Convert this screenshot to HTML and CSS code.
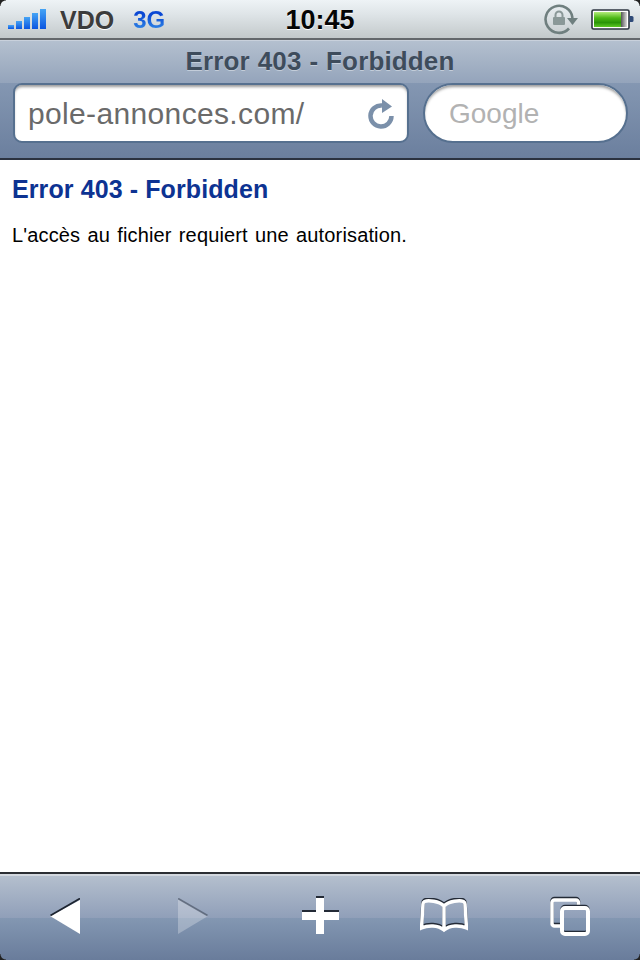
FILE: index.html
```html
<!DOCTYPE html>
<html lang="fr">
<head>
<meta charset="utf-8">
<title>Error 403 - Forbidden</title>
<link rel="stylesheet" href="styles.css">
</head>
<body>
<div class="phone">
  <header class="status">
    <div class="status-left">
      <svg class="signal" width="40" height="22" viewBox="0 0 40 22">
        <defs><linearGradient id="sig" x1="0" y1="0" x2="0" y2="1"><stop offset="0" stop-color="#45a4f5"/><stop offset="1" stop-color="#0b55e0"/></linearGradient></defs>
        <rect x="0" y="16" width="6" height="4" fill="url(#sig)"/>
        <rect x="8" y="12" width="6" height="8" fill="url(#sig)"/>
        <rect x="16" y="8" width="6" height="12" fill="url(#sig)"/>
        <rect x="24" y="4" width="6" height="16" fill="url(#sig)"/>
        <rect x="32" y="0" width="6" height="20" fill="url(#sig)"/>
      </svg>
      <span class="carrier">VDO</span>
      <span class="network">3G</span>
    </div>
    <div class="clock">10:45</div>
    <div class="status-right">
      <svg class="rotlock" width="36" height="34" viewBox="0 0 36 34">
        <path d="M25 25.500A13.500 13.500 0 1 1 28.500 15" fill="none" stroke="#6f7f7f" stroke-width="2.600"/>
        <path d="M23 15h11l-5.500 7z" fill="#6f7f7f"/>
        <rect x="9" y="14" width="12" height="8" rx="1" fill="#8a9898"/>
        <path d="M11.500 14v-2a3.500 3.500 0 0 1 7 0V14" fill="none" stroke="#8a9898" stroke-width="2"/>
      </svg>
      <svg class="battery" width="44" height="22" viewBox="0 0 44 22">
        <defs>
          <linearGradient id="bat" x1="0" y1="0" x2="0" y2="1"><stop offset="0" stop-color="#b4ec7c"/><stop offset=".4" stop-color="#4cb816"/><stop offset=".7" stop-color="#2a9408"/><stop offset="1" stop-color="#5cc824"/></linearGradient>
          <linearGradient id="batend" x1="0" y1="0" x2="1" y2="0"><stop offset="0" stop-color="#555"/><stop offset="1" stop-color="#ddd"/></linearGradient>
        </defs>
        <rect x="1" y="1" width="37" height="19" rx="1.500" fill="#fff" stroke="#2c3440" stroke-width="1.600"/>
        <rect x="3" y="3" width="27" height="15" fill="url(#bat)"/>
        <rect x="30" y="3" width="6" height="15" fill="url(#batend)"/>
        <path d="M38.500 7h2.500a1.500 1.500 0 0 1 1.500 1.500v3a1.500 1.500 0 0 1-1.500 1.500h-2.500z" fill="#2f4a78"/>
      </svg>
    </div>
  </header>
  <section class="nav">
    <h1 class="nav-title">Error 403 - Forbidden</h1>
    <div class="fields">
      <div class="url-field">
        <span class="url-text">pole-annonces.com/</span>
        <svg class="reload" width="28" height="32" viewBox="0 0 28 32">
          <path d="M23.500 18A10.500 10.500 0 1 1 14 7.500" fill="none" stroke="#7b90aa" stroke-width="4.500"/>
          <path d="M14 1l10 7.500-10 6.500z" fill="#7b90aa"/>
        </svg>
      </div>
      <div class="search-field"><span class="search-text">Google</span></div>
    </div>
  </section>
  <main class="content">
    <h2 class="heading">Error 403 - Forbidden</h2>
    <p class="message">L'accès au fichier requiert une autorisation.</p>
  </main>
  <footer class="toolbar">
    <svg class="tool tool-back" width="30" height="36" viewBox="0 0 30 36">
      <path d="M30 2v34L0 18z" fill="#fff"/>
      <path d="M30 0.500L0.500 17.500" stroke="#1d2430" stroke-width="1.800" fill="none"/>
    </svg>
    <svg class="tool tool-forward" width="30" height="36" viewBox="0 0 30 36">
      <path d="M0 1v35l30-18z" fill="#fff" fill-opacity=".27"/>
      <path d="M0 .5L29.500 17.500" stroke="#3c4656" stroke-opacity=".6" stroke-width="1.800" fill="none"/>
    </svg>
    <svg class="tool tool-add" width="37" height="38" viewBox="0 0 37 38">
      <path d="M14 0h8v2h-8zM0 14h14v2H0zM22 14h15v2H22z" fill="#232a36"/>
      <path d="M14 2h8v14h15v8H22v14h-8V24H0v-8h14z" fill="#fff"/>
    </svg>
    <svg class="tool tool-book" width="48" height="35" viewBox="0 0 48 35">
      <path class="emboss" transform="translate(0 -1.500)" d="M24 8C19 3 8 2 4.500 3.500Q3 4.300 3 6L1.500 30C8 27 18 27 24 32C30 27 40 27 46.500 30L45 6Q45 4.300 43.500 3.500C40 2 29 3 24 8ZM24 8V31"/>
      <path class="line" d="M24 8C19 3 8 2 4.500 3.500Q3 4.300 3 6L1.500 30C8 27 18 27 24 32C30 27 40 27 46.500 30L45 6Q45 4.300 43.500 3.500C40 2 29 3 24 8ZM24 8V31"/>
    </svg>
    <svg class="tool tool-tabs" width="41" height="42" viewBox="0 0 41 42">
      <path class="emboss" transform="translate(0 -1.500)" d="M28.500 10V6.500a2.500 2.500 0 0 0-2.500-2.500H4.500A2.500 2.500 0 0 0 2 6.500V27.500a2.500 2.500 0 0 0 2.500 2.500H10"/>
      <path class="line" d="M28.500 10V6.500a2.500 2.500 0 0 0-2.500-2.500H4.500A2.500 2.500 0 0 0 2 6.500V27.500a2.500 2.500 0 0 0 2.500 2.500H10"/>
      <rect class="emboss" x="12" y="10.500" width="26" height="26" rx="3"/>
      <rect class="line frame" x="12" y="12" width="26" height="26" rx="3"/>
    </svg>
  </footer>
  <span class="corner corner-tl"></span>
  <span class="corner corner-tr"></span>
  <span class="corner corner-bl"></span>
  <span class="corner corner-br"></span>
</div>
</body>
</html>
```
FILE: styles.css
```css
* { box-sizing: border-box; }
html, body { margin: 0; padding: 0; background: #fff; }
body { font-family: "Liberation Sans", Arial, sans-serif; }

.phone {
  position: relative;
  width: 640px;
  height: 960px;
  overflow: hidden;
  display: flex;
  flex-direction: column;
}

/* Status bar */
.status {
  height: 40px;
  flex: none;
  display: grid;
  grid-template-columns: 1fr auto 1fr;
  align-items: center;
  padding-top: 2px;
  background: linear-gradient(#eef3f6 0, #dfe5e8 14px, #c3c9cb 38px);
  border-bottom: 2px solid #64686c;
}
.status-left { display: flex; align-items: center; padding-left: 8px; }
.carrier {
  margin-left: 12px;
  font-size: 25px;
  font-weight: bold;
  color: #3c3c3c;
  text-shadow: 0 1px 0 #fff;
}
.network {
  margin-left: 19px;
  font-size: 24px;
  font-weight: bold;
  color: transparent;
  background: linear-gradient(#0a48d4 30%, #2f86e6 85%);
  -webkit-background-clip: text;
  background-clip: text;
}
.clock {
  font-size: 27px;
  font-weight: bold;
  color: #050505;
  text-shadow: 0 1px 0 #fff;
}
.status-right {
  display: flex;
  align-items: center;
  justify-content: flex-end;
  padding-right: 5px;
  gap: 11px;
}

/* Navigation bar */
.nav {
  height: 120px;
  flex: none;
  display: flex;
  flex-direction: column;
  background: linear-gradient(#c9d1dc 0, #c9d1dc 1px, #b4c0cf 1px, #94a4bb 43px, #8497b2 43px, #6b7f9e 118px);
  border-bottom: 2px solid #2b3240;
}
.nav-title {
  margin: 0;
  height: 43px;
  padding-top: 5px;
  text-align: center;
  font-size: 26px;
  line-height: 32px;
  font-weight: bold;
  letter-spacing: .15px;
  word-spacing: .5px;
  color: #3e4c5c;
  text-shadow: 0 1px 0 #c3cdda;
}
.fields {
  display: flex;
  gap: 14px;
  padding-left: 13px;
}
.url-field, .search-field {
  height: 60px;
  display: flex;
  align-items: center;
  padding-top: 2px;
  background: #fff;
  border: 2px solid #56708f;
  box-shadow: inset 0 3px 3px -1px #9a9a9a;
}
.url-field {
  width: 396px;
  border-radius: 9px;
  padding-left: 13px;
  padding-right: 11px;
  justify-content: space-between;
}
.url-text {
  font-size: 30px;
  letter-spacing: .35px;
  color: #6a6a6a;
}
.search-field {
  width: 205px;
  border-radius: 30px;
  padding-left: 24px;
}
.search-text {
  font-size: 28px;
  color: #b2b2b2;
}

/* Page content */
.content {
  flex: 1;
  min-height: 0;
  padding: 15px 12px 0;
  background: #fff;
}
.heading {
  margin: 0;
  font-size: 25px;
  line-height: 28px;
  font-weight: bold;
  letter-spacing: .1px;
  color: #0d3392;
}
.message {
  margin: 20px 0 0;
  font-size: 20px;
  line-height: 24px;
  letter-spacing: .15px;
  word-spacing: 1.5px;
  color: #000;
}

/* Toolbar */
.toolbar {
  height: 88px;
  flex: none;
  display: flex;
  align-items: flex-start;
  padding-left: 50px;
  border-top: 2px solid #2b2e33;
  background: linear-gradient(#d3d8df 0, #d3d8df 2px, #b4bfce 2px, #909fb9 44px, #8397b2 44px, #697c9b 86px);
}
.tool { flex: none; display: block; }
.tool-back { margin-top: 24px; }
.tool-forward { margin-top: 24px; margin-left: 98px; }
.tool-add { margin-top: 22px; margin-left: 94px; }
.tool-book { margin-top: 24px; margin-left: 81px; }
.tool-tabs { margin-top: 22px; margin-left: 82px; }
.emboss { fill: none; stroke: #232a36; stroke-width: 3.500; }
.line { fill: none; stroke: #fff; stroke-width: 3.500; }
.frame { stroke-width: 4; }

/* Screen corners */
.corner {
  position: absolute;
  width: 6px;
  height: 6px;
}
.corner-tl { top: 0; left: 0; background: radial-gradient(circle at 100% 100%, transparent 5px, #222 6px); }
.corner-tr { top: 0; right: 0; background: radial-gradient(circle at 0 100%, transparent 5px, #222 6px); }
.corner-bl { bottom: 0; left: 0; background: radial-gradient(circle at 100% 0, transparent 5px, #222 6px); }
.corner-br { bottom: 0; right: 0; background: radial-gradient(circle at 0 0, transparent 5px, #222 6px); }
```
